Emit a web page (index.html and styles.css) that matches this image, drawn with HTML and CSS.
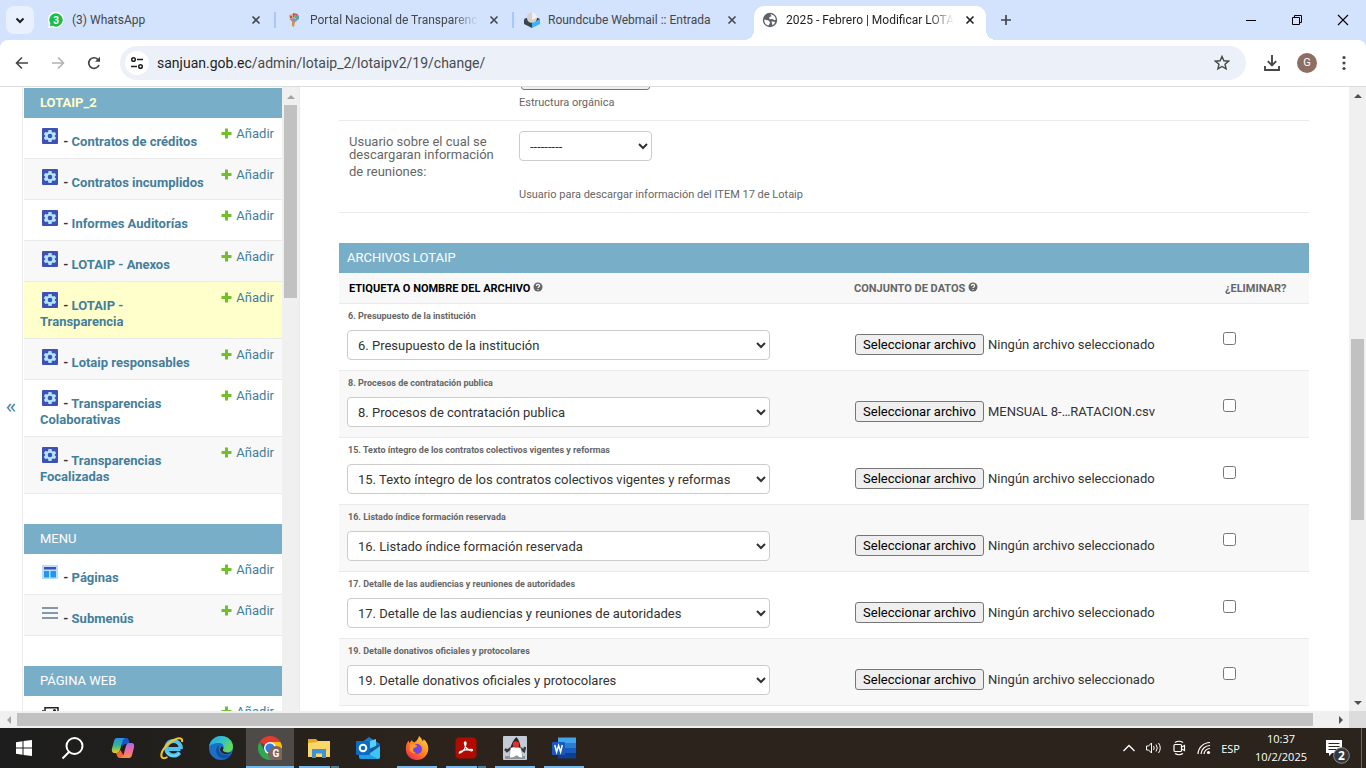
FILE: index.html
```html
<!DOCTYPE html>
<html lang="es">
<head>
  <meta charset="UTF-8" />
  <meta name="viewport" content="width=device-width, initial-scale=1.0"/>
  <title>2025 - Febrero | Modificar LOTAIP</title>
  <link rel="stylesheet" href="styles.css">
</head>
<body>
  <svg class="defs" aria-hidden="true">
    <symbol id="i-gear" viewBox="0 0 20 20">
      <rect x="2" y="2" width="16" height="16" rx="1" fill="#3f51b5"/>
      <path fill="#b3e5fc" fill-rule="evenodd" d="M8.500 4h3l.4 1.900 1 .6 1.900-.6 1.400 2.400-1.400 1.300v.8l1.400 1.300-1.400 2.400-1.900-.6-1 .6-.4 1.900h-3l-.4-1.900-1-.6-1.900.6-1.400-2.400 1.400-1.300v-.8L3.800 8.300l1.400-2.400 1.900.6 1-.6zM10 7.700a2.300 2.300 0 1 0 0 4.600 2.300 2.300 0 0 0 0-4.600z"/>
    </symbol>
    <symbol id="i-plus" viewBox="0 0 11 11">
      <path fill="#70bf2b" d="M4 .5h3V4h3.500v3H7v3.500H4V7H.5V4H4z"/>
    </symbol>
    <symbol id="i-help" viewBox="0 0 10 10">
      <circle cx="5" cy="5" r="4.500" fill="#666"/>
      <path d="M3.400 3.900c0-2 3.200-2 3.200 0 0 1-1.600 1-1.600 2M5 6.900v1.100" fill="none" stroke="#fff" stroke-width="1.200"/>
    </symbol>
    <symbol id="i-close" viewBox="0 0 16 16">
      <path d="M4.500 4.500l7 7M11.500 4.500l-7 7" stroke="currentColor" stroke-width="1.600"/>
    </symbol>
  </svg>

  <header class="browser">
    <div class="tabstrip">
      <button class="tab-search" type="button" aria-label="Buscar pestañas">
        <svg width="12" height="12" viewBox="0 0 12 12"><path d="M2.500 4.500L6 8l3.500-3.500" fill="none" stroke="#1f1f1f" stroke-width="2"/></svg>
      </button>
      <div class="tabs">
        <div class="tab">
          <svg class="favicon" viewBox="0 0 16 16"><path fill="#fff" d="M8 0a8 8 0 1 1-4 15L0 16l1-4A8 8 0 0 1 8 0z"/><path fill="#1bbd4b" d="M8 1.300a6.700 6.700 0 1 1-3.500 12.400L1.800 14.300l.6-2.700A6.700 6.700 0 0 1 8 1.300z"/><text x="8" y="11.500" text-anchor="middle" class="badge-text">3</text></svg>
          <span class="tab-title">(3) WhatsApp</span>
          <button class="tab-close" type="button" aria-label="Cerrar"><svg><use href="#i-close"/></svg></button>
        </div>
        <div class="tab">
          <svg class="favicon" viewBox="0 0 16 16"><path fill="#e9a06b" d="M3 3l4-1 1 4-4 2z"/><path fill="#c9506a" d="M7 1l5 1-2 4-3-1z"/><path fill="#5aa7a0" d="M10 4l3-1v4l-3 2z"/><path fill="#8d8fb5" d="M4 7l5-1 2 3-4 2z"/><path fill="#d58f4f" d="M6 9l3 1-1 5-2-1z"/><circle cx="5" cy="5" r="1" fill="#b23a48"/><circle cx="9" cy="4" r="1" fill="#7bbf7b"/></svg>
          <span class="tab-title faded">Portal Nacional de Transparencia</span>
          <button class="tab-close" type="button" aria-label="Cerrar"><svg><use href="#i-close"/></svg></button>
        </div>
        <div class="tab">
          <svg class="favicon" viewBox="0 0 16 16"><path fill="#37474f" d="M0 7l8 4v5l-8-4z"/><path fill="#37b5f5" d="M16 7l-8 4v5l8-4z"/><path fill="#263238" d="M0 7l8-3 8 3-8 4z"/><circle cx="8" cy="5.500" r="5.200" fill="#d2d2d2"/><path fill="#f0f0f0" d="M8 .3a5.200 5.200 0 0 1 5.200 5.200L8 8z"/></svg>
          <span class="tab-title">Roundcube Webmail :: Entrada</span>
          <button class="tab-close" type="button" aria-label="Cerrar"><svg><use href="#i-close"/></svg></button>
        </div>
        <div class="tab active">
          <svg class="favicon" viewBox="0 0 16 16"><circle cx="8" cy="8" r="7.200" fill="#5f6368"/><path fill="#fff" d="M2.300 7.500l4.200 1 1.300 1.600v1.500l-1.400 2C3.600 13 2 10.500 2.300 7.500zM8.200 2.300c3 0 5.500 2.300 5.600 5.200l-1.300.8-2-1.300-2.700.2-.8-1.200 1-1.200 1.700-.5zM9.500 9.300l3.600.7c-.6 1.700-1.600 2.800-2.600 3.300z"/></svg>
          <span class="tab-title faded">2025 - Febrero | Modificar LOTAIP</span>
          <button class="tab-close" type="button" aria-label="Cerrar"><svg><use href="#i-close"/></svg></button>
        </div>
      </div>
      <button class="new-tab" type="button" aria-label="Nueva pestaña">
        <svg width="16" height="16" viewBox="0 0 16 16"><path d="M8 3v10M3 8h10" stroke="#444746" stroke-width="1.700"/></svg>
      </button>
      <div class="window-buttons">
        <button type="button" aria-label="Minimizar"><svg width="12" height="12" viewBox="0 0 12 12"><path d="M1 6.500h10" stroke="#000"/></svg></button>
        <button type="button" aria-label="Restaurar"><svg width="12" height="12" viewBox="0 0 12 12"><path d="M1.500 3.500h7v7h-7zM3.500 3.500v-2h7v7h-2" fill="none" stroke="#000"/></svg></button>
        <button type="button" aria-label="Cerrar ventana"><svg width="12" height="12" viewBox="0 0 12 12"><path d="M1 1l10 10M11 1L1 11" stroke="#000" stroke-width="1.100"/></svg></button>
      </div>
    </div>

    <div class="toolbar">
      <button class="tool" type="button" aria-label="Atrás"><svg width="16" height="16" viewBox="0 0 16 16"><path d="M14 8H3M8 2.500L2.500 8 8 13.500" fill="none" stroke="#444746" stroke-width="1.600"/></svg></button>
      <button class="tool" type="button" aria-label="Adelante"><svg width="16" height="16" viewBox="0 0 16 16"><path d="M2 8h11M8 2.500L13.500 8 8 13.500" fill="none" stroke="#b0b2b3" stroke-width="1.600"/></svg></button>
      <button class="tool" type="button" aria-label="Recargar"><svg width="16" height="16" viewBox="0 0 16 16"><path d="M13 10a5.300 5.300 0 1 1-1.200-5.700L13.500 6" fill="none" stroke="#444746" stroke-width="1.700"/><path d="M14 1.800v5H9z" fill="#444746"/></svg></button>
      <div class="omnibox">
        <button class="site-info" type="button" aria-label="Información del sitio"><svg width="14" height="14" viewBox="0 0 14 14"><g fill="none" stroke="#1f1f1f" stroke-width="1.500"><circle cx="3.500" cy="3.500" r="1.800"/><path d="M7 3.500h6M1 10.500h6"/><circle cx="10.500" cy="10.500" r="1.800"/></g></svg></button>
        <span class="url"><b>sanjuan.gob.ec</b>/admin/lotaip_2/lotaipv2/19/change/</span>
        <button class="star" type="button" aria-label="Favorito"><svg width="16" height="16" viewBox="0 0 16 16"><path d="M8 1.500l1.900 4.300 4.700.4L11 9.300l1.100 4.600L8 11.500l-4.100 2.400L5 9.300 1.400 6.200l4.700-.4z" fill="none" stroke="#444746" stroke-width="1.400"/></svg></button>
      </div>
      <button class="tool download" type="button" aria-label="Descargas"><svg width="16" height="16" viewBox="0 0 16 16"><path d="M8 0v10M3.800 6.200L8 10.400l4.200-4.200M1 11v4h14v-4" fill="none" stroke="#444746" stroke-width="1.900"/></svg></button>
      <button class="avatar" type="button">G</button>
      <button class="tool menu" type="button" aria-label="Menú"><svg width="16" height="16" viewBox="0 0 16 16" fill="#444746"><circle cx="8" cy="2.500" r="1.600"/><circle cx="8" cy="8" r="1.600"/><circle cx="8" cy="13.500" r="1.600"/></svg></button>
    </div>
  </header>

  <div class="page">
    <button class="toggle-nav" type="button" aria-label="Alternar navegación">«</button>
    <nav class="sidebar">
      <div class="modules">
        <table class="module current-app">
          <caption><a href="#">LOTAIP_2</a></caption>
          <tr><th><svg class="icon"><use href="#i-gear"/></svg> - <a href="#">Contratos de créditos</a></th><td><a href="#"><svg><use href="#i-plus"/></svg>Añadir</a></td></tr>
          <tr><th><svg class="icon"><use href="#i-gear"/></svg> - <a href="#">Contratos incumplidos</a></th><td><a href="#"><svg><use href="#i-plus"/></svg>Añadir</a></td></tr>
          <tr><th><svg class="icon"><use href="#i-gear"/></svg> - <a href="#">Informes Auditorías</a></th><td><a href="#"><svg><use href="#i-plus"/></svg>Añadir</a></td></tr>
          <tr><th><svg class="icon"><use href="#i-gear"/></svg> - <a href="#">LOTAIP - Anexos</a></th><td><a href="#"><svg><use href="#i-plus"/></svg>Añadir</a></td></tr>
          <tr class="current"><th><svg class="icon"><use href="#i-gear"/></svg> - <a href="#">LOTAIP - Transparencia</a></th><td><a href="#"><svg><use href="#i-plus"/></svg>Añadir</a></td></tr>
          <tr><th><svg class="icon"><use href="#i-gear"/></svg> - <a href="#">Lotaip responsables</a></th><td><a href="#"><svg><use href="#i-plus"/></svg>Añadir</a></td></tr>
          <tr><th><svg class="icon"><use href="#i-gear"/></svg> - <a href="#">Transparencias Colaborativas</a></th><td><a href="#"><svg><use href="#i-plus"/></svg>Añadir</a></td></tr>
          <tr><th><svg class="icon"><use href="#i-gear"/></svg> - <a href="#">Transparencias Focalizadas</a></th><td><a href="#"><svg><use href="#i-plus"/></svg>Añadir</a></td></tr>
        </table>

        <table class="module">
          <caption><a href="#">Menu</a></caption>
          <tr><th><svg class="icon" viewBox="0 0 20 20"><path fill="#bbdefb" d="M2 3h16v14H2z"/><path fill="#2196f3" d="M4 9h5v6.500H4zM10.500 9h5.500v6.500h-5.500z"/><path fill="#3f51b5" d="M4 5h12v2.500H4z"/></svg> - <a href="#">Páginas</a></th><td><a href="#"><svg><use href="#i-plus"/></svg>Añadir</a></td></tr>
          <tr><th><svg class="icon" viewBox="0 0 20 20"><path fill="#8797a5" d="M2 4h16v2H2zM2 9h16v2H2zM2 14h16v2H2z"/></svg> - <a href="#">Submenús</a></th><td><a href="#"><svg><use href="#i-plus"/></svg>Añadir</a></td></tr>
        </table>

        <table class="module">
          <caption><a href="#">Página web</a></caption>
          <tr><th><svg class="icon" viewBox="0 0 20 20"><path fill="none" stroke="#222" stroke-width="1.500" d="M5 3.700h13v12H5zM3 6v12h13"/><circle cx="14.500" cy="6.500" r="1.500" fill="#222"/><path fill="#222" d="M6 13l3-6 3 3 5 5H6z"/></svg> - <a href="#">Galería</a></th><td><a href="#"><svg><use href="#i-plus"/></svg>Añadir</a></td></tr>
        </table>
      </div>
      <div class="scroll-v nav-scroll"><i class="arrow up light"></i><i class="thumb"></i></div>
    </nav>

    <main class="content">
      <form>
        <div class="form-row">
          <label for="estructura">Estructura orgánica:</label>
          <div class="field">
            <button class="file-button" id="estructura" type="button">Seleccionar archivo</button>
            <div class="help">Estructura orgánica</div>
          </div>
        </div>
        <div class="form-row">
          <label for="usuario">Usuario sobre el cual se descargaran información <span>de reuniones:</span></label>
          <div class="field">
            <select id="usuario" class="user-select"><option>---------</option></select>
            <div class="help help-user">Usuario para descargar información del ITEM 17 de Lotaip</div>
          </div>
        </div>

        <h2>Archivos Lotaip</h2>
        <table class="files">
          <thead>
            <tr>
              <th class="col-label">Etiqueta o nombre del archivo <svg><use href="#i-help"/></svg></th>
              <th class="col-data">Conjunto de datos <svg><use href="#i-help"/></svg></th>
              <th class="col-delete">¿Eliminar?</th>
            </tr>
          </thead>
          <tbody>
            <tr>
              <td><label for="f1">6. Presupuesto de la institución</label><select id="f1"><option>6. Presupuesto de la institución</option></select></td>
              <td class="file"><button class="file-button" type="button">Seleccionar archivo</button><span>Ningún archivo seleccionado</span></td>
              <td class="delete"><input type="checkbox" aria-label="Eliminar"></td>
            </tr>
            <tr>
              <td><label for="f2">8. Procesos de contratación publica</label><select id="f2"><option>8. Procesos de contratación publica</option></select></td>
              <td class="file"><button class="file-button" type="button">Seleccionar archivo</button><span>MENSUAL 8-…RATACION.csv</span></td>
              <td class="delete"><input type="checkbox" aria-label="Eliminar"></td>
            </tr>
            <tr>
              <td><label for="f3">15. Texto íntegro de los contratos colectivos vigentes y reformas</label><select id="f3"><option>15. Texto íntegro de los contratos colectivos vigentes y reformas</option></select></td>
              <td class="file"><button class="file-button" type="button">Seleccionar archivo</button><span>Ningún archivo seleccionado</span></td>
              <td class="delete"><input type="checkbox" aria-label="Eliminar"></td>
            </tr>
            <tr>
              <td><label for="f4">16. Listado índice formación reservada</label><select id="f4"><option>16. Listado índice formación reservada</option></select></td>
              <td class="file"><button class="file-button" type="button">Seleccionar archivo</button><span>Ningún archivo seleccionado</span></td>
              <td class="delete"><input type="checkbox" aria-label="Eliminar"></td>
            </tr>
            <tr>
              <td><label for="f5">17. Detalle de las audiencias y reuniones de autoridades</label><select id="f5"><option>17. Detalle de las audiencias y reuniones de autoridades</option></select></td>
              <td class="file"><button class="file-button" type="button">Seleccionar archivo</button><span>Ningún archivo seleccionado</span></td>
              <td class="delete"><input type="checkbox" aria-label="Eliminar"></td>
            </tr>
            <tr>
              <td><label for="f6">19. Detalle donativos oficiales y protocolares</label><select id="f6"><option>19. Detalle donativos oficiales y protocolares</option></select></td>
              <td class="file"><button class="file-button" type="button">Seleccionar archivo</button><span>Ningún archivo seleccionado</span></td>
              <td class="delete"><input type="checkbox" aria-label="Eliminar"></td>
            </tr>
          </tbody>
        </table>
      </form>
    </main>
    <div class="scroll-v page-scroll"><i class="arrow up"></i><i class="track before"></i><i class="thumb"></i><i class="track after"></i><i class="arrow down"></i></div>
  </div>

  <div class="scroll-h"><i class="arrow left light"></i><i class="thumb"></i><i class="track"></i><i class="arrow right"></i><i class="corner"></i></div>

  <footer class="taskbar">
    <button class="task start" type="button" aria-label="Inicio"><svg viewBox="0 0 24 24"><path fill="#fff" d="M4 6.200l6.500-.9v6.200H4zM11.500 5.100L20 4v7.500h-8.500zM4 12.500h6.500v6.200L4 17.800zM11.500 12.500H20V20l-8.500-1.100z"/></svg></button>
    <button class="task search" type="button" aria-label="Buscar"><svg viewBox="0 0 24 24"><circle cx="13.500" cy="10" r="8" fill="none" stroke="#fff" stroke-width="2"/><path d="M8 16L1.500 22.500" stroke="#fff" stroke-width="2"/></svg></button>
    <button class="task" type="button" aria-label="Copilot"><svg viewBox="0 0 24 24">
      <defs>
        <linearGradient id="cp1" x1="0" y1="0" x2="0" y2="1"><stop offset="0" stop-color="#2a8df0"/><stop offset=".5" stop-color="#2fb98a"/><stop offset="1" stop-color="#f2c81e"/></linearGradient>
        <linearGradient id="cp2" x1="0" y1="0" x2="0" y2="1"><stop offset="0" stop-color="#a56bf0"/><stop offset=".5" stop-color="#ef6ba0"/><stop offset="1" stop-color="#f9903c"/></linearGradient>
      </defs>
      <path fill="#1b54c8" d="M10 2h5c2 0 2.500 1.200 3 3l.8 3h-4c-2 0-3 1-3.500 3z"/>
      <path fill="url(#cp1)" d="M6 2h8c-2 1-2.500 3-3 5l-2 7c-.5 2-1.500 3-3.500 3H4c-3 0-3.500-2-3-4.500L3 5c.5-2 1.500-3 3-3z"/>
      <path fill="#f06a35" d="M14 22H9c-2 0-2.700-1.200-3.200-3L5 17c2 0 4-1 4.500-3z"/>
      <path fill="url(#cp2)" d="M18 22h-8c2-1 2.500-3 3-5l2-7c.5-2 1.500-3 3.500-3H20c3 0 3.500 2 3 4.500L21 19c-.5 2-1.500 3-3 3z"/>
    </svg></button>
    <button class="task" type="button" aria-label="Internet Explorer"><svg viewBox="0 0 24 24">
      <path d="M20.500 13H8.500M19.500 16.500A7.300 7.300 0 1 1 20.800 13" fill="none" stroke="#4fc3f0" stroke-width="4"/>
      <path d="M19.500 17A8 8 0 0 1 7 17" fill="none" stroke="#8ee0fa" stroke-width="1"/>
      <path d="M22 6c.8-3-1.500-5-6-3C9 5.500 1 14 1.300 19.500c.2 3.500 3.500 3 6.200 1.500" fill="none" stroke="#f6c52c" stroke-width="2"/>
    </svg></button>
    <button class="task" type="button" aria-label="Edge"><svg viewBox="0 0 24 24">
      <defs><linearGradient id="ed1" x1="0" y1="0" x2="1" y2=".4"><stop offset="0" stop-color="#2aa5e8"/><stop offset=".6" stop-color="#33c3c4"/><stop offset="1" stop-color="#66d854"/></linearGradient></defs>
      <circle cx="12" cy="12" r="12" fill="#1a6fc9"/>
      <path fill="url(#ed1)" d="M0 11C1 4 6 0 12 0c7 0 12 5 12 10.500 0 4-3 6-6 6s-5-1.500-4-3c2-3 0-6.500-4-6.500C5 7 1 9 0 11z"/>
      <path fill="#124f9c" d="M10 9.500c-4 2-4 9 1.500 12 3 1.500 7 .8 9.500-2.500l.5-1c-4 2.300-9 1.300-11-2-1.200-2-1.200-4.500-.5-6.500z"/>
      <path fill="#2c2622" d="M12.500 10.500c-1 1-2 3-.8 5 1.800 2.800 6 3.600 9.500 1.800l2-1.500c-2 1-5 1.200-7.200.3-2-.8-2.500-1.500-2-2.600.6-1 .4-2.700-1.500-3z"/>
    </svg></button>
    <button class="task open current" type="button" aria-label="Chrome"><svg viewBox="0 0 24 24">
      <path fill="#e33b2e" d="M1.600 6L12 12V6h10.400A12 12 0 0 0 1.600 6z"/>
      <path fill="#fbc116" d="M22.400 6A12 12 0 0 1 12 24l5.200-9L12 6z"/>
      <path fill="#2da94f" d="M12 24A12 12 0 0 1 1.600 6l5.200 9L12 18l3 1z"/>
      <circle cx="12" cy="12" r="6" fill="#fff"/><circle cx="12" cy="12" r="4.600" fill="#2f7de9"/>
      <circle cx="18" cy="18" r="8" fill="#7f655c"/><text x="18" y="21" text-anchor="middle" class="badge-text">G</text>
    </svg></button>
    <button class="task open multi" type="button" aria-label="Explorador"><svg viewBox="0 0 24 24">
      <path fill="#e5a91a" d="M1 3h8l2 2h12v4H1z"/><path fill="#fbd668" d="M1 7l9-1 1-1h12v16H1z"/>
      <path fill="#3e93d6" d="M5 13h14v9h-4v-4.500H9V22H5z"/>
    </svg></button>
    <button class="task" type="button" aria-label="Outlook"><svg viewBox="0 0 24 24">
      <path fill="#1a78c8" d="M2 9l11-8 11 7v6H2z"/><path fill="#5ad0f8" d="M8 7l12-4v10L12 18z"/><path fill="#0e5aa5" d="M13 13l11-5v5l-9 5z"/>
      <path fill="#3cc4f4" d="M24 10v11c0 1-.5 2-2 2H6z"/><path fill="#1f9fe5" d="M3 13l19 10H5c-1.500 0-2-1-2-2z"/>
      <rect x="0" y="5" width="14" height="14" rx="1" fill="#0b6cc4"/><circle cx="7" cy="12" r="3.300" fill="none" stroke="#fff" stroke-width="2"/>
    </svg></button>
    <button class="task open" type="button" aria-label="Firefox"><svg viewBox="0 0 24 24">
      <defs><linearGradient id="ff1" x1="1" y1="0" x2=".2" y2="1"><stop offset="0" stop-color="#ffe14a"/><stop offset=".5" stop-color="#ff8a1f"/><stop offset="1" stop-color="#f5284f"/></linearGradient></defs>
      <path fill="url(#ff1)" d="M14 0c2 1.500 3 3.300 3.500 5 1-.3 1.200-1 1-2 3 2.500 5 6 4.800 10C23 19.500 18 24 12 24S.8 19.500.8 13c0-3.500 1-6 2.700-8.500L4.300 7 7 4c.3 1.500 1 2.200 2.500 2.300C11.500 5 13.500 3 14 0z"/>
      <circle cx="12" cy="13" r="5" fill="#7542e5"/><path fill="#ff9a2a" d="M5 9c3-1.500 6-1 7 1 .3 1-2.500 1.300-3.500 2.500-1 1.500 0 4 3 4.500-4 1.500-7-1-7-4z"/>
    </svg></button>
    <button class="task open multi" type="button" aria-label="Acrobat"><svg viewBox="0 0 24 24">
      <rect x="1.500" y="1.500" width="21" height="21" rx="4" fill="#b30b00"/>
      <path d="M6 17c3-1 5.500-5 6-9.500.2-2-1.800-2-1.500 0 .8 4 3.500 6.800 7 7.300 1.500 0 1.300-1.500-.2-1.500-4 0-8 .8-11 2.200-1.300.8-1.400 2-.3 1.500z" fill="none" stroke="#fff" stroke-width="1.300"/>
    </svg></button>
    <button class="task open" type="button" aria-label="Java"><svg viewBox="0 0 24 24">
      <rect width="24" height="24" rx="1" fill="#c3ccd4"/>
      <path fill="#8d969e" d="M2 20h20v3H2z"/>
      <path d="M8 12l-4 3-2-2M17 12l4 3 1-4" fill="none" stroke="#3a3a3a" stroke-width="2.500"/>
      <path fill="#fff" stroke="#777" stroke-width=".5" d="M8 10h9c1.500 4 2.500 8 2.500 12l-3-.5-3-2-3 2-4 .5C6.500 18 7 14 8 10z"/>
      <path fill="#262626" d="M13.500 1c2.500 3 4 7 4 11-3-1.500-7-1.500-10 0 1-4.500 3-8.500 6-11z"/>
      <circle cx="13" cy="8.500" r="3.200" fill="#dd3030"/>
    </svg></button>
    <button class="task open" type="button" aria-label="Word"><svg viewBox="0 0 24 24">
      <path fill="#41a5ee" d="M6 1.500h18V7H6z"/><path fill="#2b7cd3" d="M6 7h18v5H6z"/><path fill="#185abd" d="M6 12h18v5H6z"/><path fill="#103f91" d="M6 17h18v5.500H6z"/>
      <rect y="6" width="13" height="13" rx="1" fill="#185abd"/><path d="M2.800 9l1.800 7 2-6.500 2 6.500 1.700-7" fill="none" stroke="#fff" stroke-width="1.500"/>
    </svg></button>

    <div class="tray">
      <svg width="16" height="16" viewBox="0 0 16 16"><path d="M2.500 11L8 5.500l5.500 5.500" fill="none" stroke="#fff" stroke-width="1.300"/></svg>
      <svg width="16" height="16" viewBox="0 0 16 16"><g fill="none" stroke="#fff"><path d="M.5 6h2l3-3v10l-3-3h-2zM7.500 6q1.500 2 0 4M10 4.500q2.500 3.500 0 7M12.500 3q3.500 5 0 10"/></g></svg>
      <svg width="16" height="16" viewBox="0 0 16 16"><g fill="none" stroke="#fff" stroke-width="1.200"><rect x="3" y="4.500" width="7.500" height="7" rx="1"/><path d="M10.500 7l3-1.500v5l-3-1.500M4 2.500q4-2.500 8 0M4 13.500q4 2.500 8 0"/></g></svg>
      <svg width="16" height="16" viewBox="0 0 16 16"><g fill="none" stroke="#fff" stroke-width="1.200"><path d="M2 14A12 12 0 0 1 14 2.500M5 14a9 9 0 0 1 9-8.500M8 14a6 6 0 0 1 6-5.500"/></g><circle cx="12.500" cy="12.500" r="1.600" fill="#fff"/></svg>
      <span class="lang">ESP</span>
      <div class="clock"><span>10:37</span><span>10/2/2025</span></div>
      <button class="notifications" type="button" aria-label="Notificaciones">
        <svg width="26" height="26" viewBox="0 0 26 26"><path fill="#fff" d="M2 2h16v13H8l-3 3v-3H2z"/><path d="M4.500 5.500h11M4.500 8.500h11M4.500 11.500h8" stroke="#2b241e"/><circle cx="17.500" cy="17.500" r="7.800" fill="#34383b" stroke="#8b8f92"/><text x="17.500" y="22" text-anchor="middle" class="count">2</text></svg>
      </button>
    </div>
  </footer>
</body>
</html>
```
FILE: styles.css
```css
* {
  box-sizing: border-box;
}
body {
  margin: 0;
  height: 100vh;
  display: flex;
  flex-direction: column;
  overflow: hidden;
  font-family: Roboto, "Liberation Sans", sans-serif;
  font-size: 13px;
  color: #333;
  background: #fff;
}
a {
  color: #447e9b;
  text-decoration: none;
}
button {
  padding: 0;
  border: none;
  background: none;
  font-family: inherit;
}
.defs {
  position: absolute;
  width: 0;
  height: 0;
}

/* browser window */
.browser {
  background: #d3e2fd;
}
.browser button,
.taskbar button {
  display: flex;
  align-items: center;
  justify-content: center;
}
.tabstrip {
  display: flex;
  height: 40px;
  padding: 6px 0 0 6px;
}
.tab-search {
  width: 28px;
  height: 28px;
  border-radius: 8px;
  background: #e9f0fe;
}
.tabs {
  display: flex;
  flex: 0 1 946px;
  gap: 6px;
  margin-left: 6px;
}
.tab {
  position: relative;
  display: flex;
  flex: 1;
  align-items: center;
  min-width: 0;
  height: 34px;
  padding: 0 8px 6px;
  font-size: 12px;
  color: #44474b;
}
.tab:nth-child(-n+2)::after {
  content: "";
  position: absolute;
  right: -4px;
  top: 6px;
  width: 2px;
  height: 16px;
  background: #a8c7fa;
}
.tab.active {
  border-radius: 10px 10px 0 0;
  background: #fff;
  color: #1f1f1f;
}
.tab.active::before,
.tab.active::after {
  content: "";
  position: absolute;
  bottom: 0;
  width: 10px;
  height: 10px;
}
.tab.active::before {
  left: -10px;
  background: radial-gradient(circle at 0 0, #d3e2fd 10px, #fff 10px);
}
.tab.active::after {
  right: -10px;
  background: radial-gradient(circle at 100% 0, #d3e2fd 10px, #fff 10px);
}
.favicon {
  flex: none;
  width: 16px;
  height: 16px;
  margin-right: 8px;
}
.badge-text {
  font: bold 10px Roboto, sans-serif;
  fill: #fff;
}
.tab-title {
  flex: 1;
  overflow: hidden;
  white-space: nowrap;
}
.faded {
  -webkit-mask-image: linear-gradient(to right, #000 85%, transparent);
  mask-image: linear-gradient(to right, #000 85%, transparent);
}
.tab-close {
  color: #44474b;
  margin-left: 8px;
}
.tab-close svg {
  width: 16px;
  height: 16px;
}
.active .tab-close {
  color: #1f1f1f;
}
.new-tab {
  width: 28px;
  height: 28px;
  margin-left: 6px;
}
.window-buttons {
  display: flex;
  margin-left: auto;
}
.window-buttons button {
  width: 46px;
  height: 28px;
}
.toolbar {
  display: flex;
  align-items: center;
  height: 47px;
  padding: 0 5px 1px 4px;
  border-bottom: 1px solid #dcdcdc;
  border-radius: 8px 8px 0 0;
  background: #fff;
}
.tool {
  width: 36px;
  height: 34px;
}
.omnibox {
  display: flex;
  flex: 1;
  align-items: center;
  height: 34px;
  margin-left: 8px;
  padding: 0 16px 0 5px;
  border-radius: 17px;
  background: #ebf0f9;
}
.site-info {
  width: 24px;
  height: 24px;
  border-radius: 50%;
  background: #fff;
}
.url {
  flex: 1;
  margin-left: 8px;
  font-size: 14px;
  color: #474a4e;
}
.url b {
  font-weight: normal;
  color: #1f1f1f;
}
.download {
  margin-left: 8px;
}
.avatar {
  width: 20px;
  height: 20px;
  margin: 0 10px 0 7px;
  border-radius: 50%;
  background: #8d6e63;
  font-size: 11px;
  color: #fff;
}
.menu {
  width: 34px;
}

/* page */
.page {
  display: flex;
  flex: 1;
  min-height: 0;
}
.toggle-nav {
  flex: none;
  width: 23px;
  padding-top: 12px;
  border-right: 1px solid #eaeaea;
  font-family: "Open Sans", sans-serif;
  font-size: 20px;
  color: #447e9b;
}
.sidebar {
  display: flex;
  flex: none;
  width: 277px;
  padding-left: 1px;
  border-right: 1px solid #eaeaea;
}
.modules {
  flex: 1;
  overflow: hidden;
  padding-top: 1px;
}
.module {
  width: 100%;
  margin-bottom: 30px;
  border-collapse: collapse;
  table-layout: fixed;
  line-height: 16px;
}
.module caption {
  height: 30px;
  padding: 7px 16px;
  background: #79aec8;
  text-align: left;
  text-transform: uppercase;
}
.module caption a {
  color: #fff;
}
.current-app caption a {
  color: #ffc;
  font-weight: bold;
}
.module tr {
  border-bottom: 1px solid #eaeaea;
}
.module tr:nth-child(even) {
  background: #f8f8f8;
}
.module tr.current {
  background: #ffc;
}
.module th {
  padding: 8px 0 8px 16px;
  text-align: left;
  vertical-align: top;
}
.module td {
  width: 77px;
  padding: 8px 8px 8px 0;
  text-align: right;
  vertical-align: top;
}
.module td svg {
  width: 11px;
  height: 11px;
  margin-right: 4px;
  vertical-align: -1px;
}
.icon {
  width: 20px;
  height: 20px;
}

.content {
  flex: 1;
  min-width: 0;
  overflow: hidden;
  padding: 0 40px 0 39px;
}
.content form {
  margin-top: -28px;
}
.form-row {
  display: flex;
  padding: 10px;
  border-bottom: 1px solid #eaeaea;
}
.form-row label {
  flex: none;
  width: 170px;
  padding: 4px 20px 0 0;
  line-height: 13px;
  color: #666;
}
.form-row label span {
  display: block;
  line-height: 22px;
}
.form-row .file-button {
  display: block;
  margin-left: 2px;
}
.help {
  margin-top: 6px;
  font-size: 11px;
  line-height: 14px;
  color: #666;
}
.help-user {
  margin-top: 27px;
}
select {
  height: 30px;
  padding: 5px 6px;
  border: 1px solid #ccc;
  border-radius: 4px;
  background: #fff;
  font-family: inherit;
  font-size: 13px;
  color: #333;
}
.user-select {
  display: block;
  width: 133px;
}
h2 {
  margin: 30px 0 0;
  padding: 7px 8px;
  background: #79aec8;
  font-size: 13px;
  font-weight: 400;
  line-height: 16px;
  text-transform: uppercase;
  color: #fff;
}
.files {
  width: 100%;
  border-collapse: collapse;
}
.files tr {
  border-bottom: 1px solid #eaeaea;
}
.files thead tr,
.files tbody tr:nth-child(even) {
  background: #f8f8f8;
}
.files th {
  padding: 8px 8px 6px 10px;
  font-size: 11px;
  line-height: 16px;
  text-align: left;
  text-transform: uppercase;
  color: #666;
}
.files th svg {
  width: 10px;
  height: 10px;
}
.files .col-label {
  color: #000;
}
.col-data {
  width: 371px;
}
.col-delete {
  width: 94px;
}
.files td {
  padding: 6px 8px 10px;
  vertical-align: top;
}
.files td label {
  display: block;
  height: 20px;
  padding-left: 1px;
  font-size: 9px;
  font-weight: bold;
  line-height: 12px;
  color: #666;
}
.files td select {
  display: block;
  width: 423px;
  max-width: 100%;
}
.files td.file {
  padding: 30px 8px 0 11px;
  white-space: nowrap;
}
.files td.file span {
  margin-left: 4px;
}
.files td.delete {
  padding-top: 28px;
}
.files input {
  display: block;
  width: 13px;
  height: 13px;
  margin: 0;
}
.file-button {
  width: 129px;
  height: 21px;
  border: 1px solid #767676;
  border-radius: 3px;
  background: #efefef;
  font-size: 13px;
  color: #000;
}

/* scrollbars */
.scroll-v,
.scroll-h {
  display: flex;
  flex: none;
  background: #f0f0f0;
}
.scroll-v {
  flex-direction: column;
  align-items: center;
  width: 17px;
}
.scroll-h {
  align-items: center;
  height: 17px;
}
.thumb {
  background: #c1c1c1;
}
.scroll-v .thumb {
  width: 13px;
}
.nav-scroll {
  padding-top: 1px;
}
.nav-scroll .thumb {
  height: 31%;
}
.page-scroll .before {
  flex: 235;
}
.page-scroll .thumb {
  flex: 181;
}
.page-scroll .after {
  flex: 174;
}
.scroll-h .thumb {
  flex: 1296;
  height: 13px;
}
.scroll-h .track {
  flex: 19;
}
.arrow {
  display: flex;
  align-items: center;
  justify-content: center;
  flex: none;
  width: 17px;
  height: 17px;
  color: #505050;
}
.arrow.light {
  color: #a3a3a3;
}
.arrow::before {
  content: "";
  border: 4px solid transparent;
}
.up::before {
  border-top: none;
  border-bottom-color: currentColor;
}
.down::before {
  border-bottom: none;
  border-top-color: currentColor;
}
.left::before {
  border-left: none;
  border-right-color: currentColor;
}
.right::before {
  border-right: none;
  border-left-color: currentColor;
}
.corner {
  flex: none;
  width: 17px;
  height: 17px;
  background: #dcdcdc;
}

/* taskbar */
.taskbar {
  display: flex;
  flex: none;
  gap: 1px;
  height: 40px;
  background: linear-gradient(to right, #1c1d1c, #2b231c 30%, #2b241d);
  font-family: "Open Sans", "Noto Sans", sans-serif;
  font-size: 12px;
  color: #fff;
}
.task {
  position: relative;
  width: 48px;
}
.task svg {
  width: 24px;
  height: 24px;
}
.task.search {
  width: 49px;
  padding-right: 2px;
}
.task.current {
  background: #4d4a48;
}
.task.open::after {
  content: "";
  position: absolute;
  left: 4px;
  right: 4px;
  bottom: 0;
  height: 2px;
  background: #76b9ed;
}
.task.current::after {
  left: 0;
  right: 0;
}
.task.multi::after {
  background: linear-gradient(to right, #76b9ed 31px, #2b241d 31px, #2b241d 32px, #527a99 32px);
}
.tray {
  display: flex;
  align-items: center;
  gap: 9px;
  margin-left: auto;
  padding-right: 4px;
}
.lang {
  font-size: 11px;
}
.clock {
  display: flex;
  flex-direction: column;
  align-items: center;
  margin-left: 6px;
  font-size: 11px;
  line-height: 18px;
}
.notifications {
  width: 46px;
  height: 40px;
  padding: 6px 4px 0 0;
  border-right: 1px solid #6b6661;
}
.count {
  font: bold 12px "Open Sans", sans-serif;
  fill: #fff;
}
```
